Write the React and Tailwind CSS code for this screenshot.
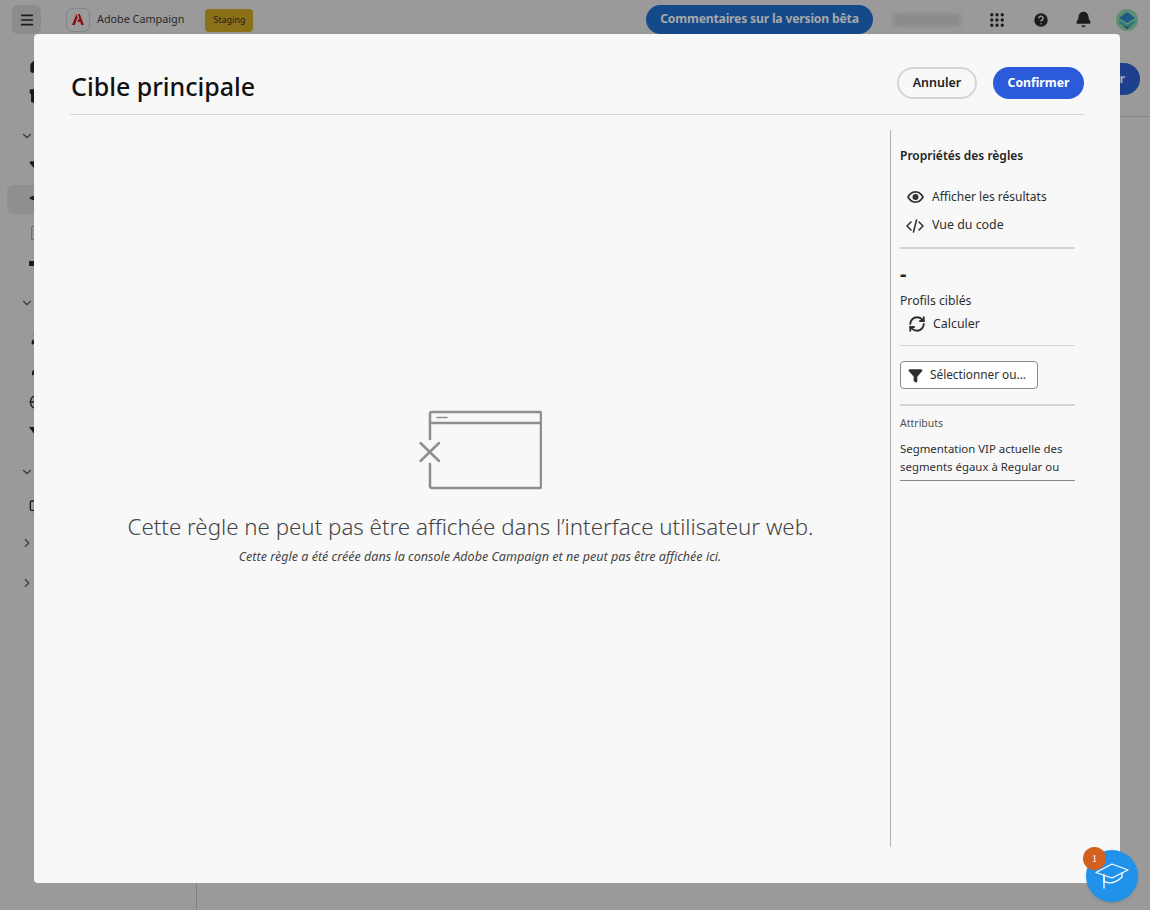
import React from "react";
import { Menu, Grip, CircleHelp, Bell, ChevronDown, ChevronRight, Home, Archive, Filter, Send, FileText, User, Globe, Monitor, RefreshCw } from "lucide-react";

const font = { fontFamily: '"Noto Sans", "Open Sans", sans-serif' };

// greyed out nav behind the dialog, only the left edge of each icon shows
const SideRow = ({ children, active, className = "" }) => (
  <div className={`h-[29px] ml-[7px] w-[60px] flex items-center pl-[22px] rounded-md ${active ? "bg-[#8f8f8f]" : ""} ${className}`}>
    {children}
  </div>
);

const NavChevron = ({ open, className = "" }) => (
  <div className={`h-[29px] pl-[20px] flex items-center text-[#3a3a3a] ${className}`}>
    {open ? <ChevronDown size={14} /> : <ChevronRight size={14} />}
  </div>
);

const Avatar = () => (
  <svg width="22" height="22" viewBox="0 0 22 22" className="ml-[24px]">
    <circle cx="11" cy="11" r="11" fill="#5f8f72" />
    <path d="M11 3L19 9L11 14L3 9Z" fill="#1d5c86" />
    <path d="M3 11L11 16L19 11L19 14L11 19L3 14Z" fill="#2c7a78" />
    <path d="M5 16L11 20L17 16A11 11 0 0 1 5 16Z" fill="#40356f" />
  </svg>
);

const TopBar = () => (
  <div className="h-[39px] flex items-center pl-3 pr-[12px] text-[#1c1c1c]">
    <div className="w-[29px] h-[29px] rounded-md bg-[#8c8c8c] flex items-center justify-center">
      <Menu size={16} strokeWidth={2.5} />
    </div>
    <div className="ml-[25px] w-6 h-6 rounded-md border border-[#858585] flex items-center justify-center">
      <svg width="12" height="11" viewBox="0 0 12 11">
        <path d="M4.2 0H7.8L12 11H9.3L8.2 8H5.4L7.2 3.8L5.6 0Z M4.4 0L0 11H2.8L5.6 3.6Z" fill="#8f1010" />
      </svg>
    </div>
    <span className="ml-[7px] text-[10.8px] text-[#2a2a2a]">Adobe Campaign</span>
    <span className="ml-[21px] mt-px h-[23px] w-[48px] rounded bg-[#8a7118] text-[9px] flex items-center justify-center">Staging</span>
    <div className="ml-auto h-[29px] w-[227px] rounded-full bg-[#154a8a] text-[#a8a8a8] text-[12.2px] font-bold flex items-center justify-center tracking-[-0.2px]">
      Commentaires sur la version bêta
    </div>
    <div className="ml-[20px] w-[68px] h-3 rounded-sm bg-[#8a8a8a] blur-[2px]"></div>
    <Grip size={18} className="ml-[27px]" strokeWidth={2.5} />
    <CircleHelp size={18} className="ml-[26px] fill-[#1c1c1c] stroke-[#9a9a9a]" />
    <Bell size={17} className="ml-[25px] fill-[#1c1c1c]" />
    <Avatar />
  </div>
);

const Sidebar = () => (
  <div className="w-[197px] shrink-0 border-r border-[#7f7f7f] text-[#1c1c1c]">
    <SideRow className="mt-[12px]"><Home size={16} className="fill-[#1c1c1c]" /></SideRow>
    <SideRow className="mt-[1px]"><Archive size={16} className="fill-[#1c1c1c]" /></SideRow>
    <NavChevron open className="mt-[11px]" />
    <SideRow className="mt-[3px]"><Filter size={16} className="fill-[#1c1c1c]" /></SideRow>
    <SideRow active className="mt-[3px]"><Send size={16} className="fill-[#1c1c1c]" /></SideRow>
    <SideRow className="mt-[4px]"><FileText size={16} className="text-[#6f6f6f]" /></SideRow>
    <SideRow className="mt-[2px]"><div className="w-3 h-[5px] bg-[#1c1c1c]"></div></SideRow>
    <NavChevron open className="mt-[10px]" />
    <SideRow className="mt-[6px]"><User size={16} className="fill-[#1c1c1c]" /></SideRow>
    <SideRow className="mt-[1px]"><User size={18} className="fill-[#1c1c1c]" /></SideRow>
    <SideRow className="mt-[5px]"><Globe size={16} /></SideRow>
    <SideRow>
      <svg width="12" height="8" viewBox="0 0 12 8"><path d="M0 0H12L6 8Z" fill="#1c1c1c" /></svg>
    </SideRow>
    <NavChevron open className="mt-[12px]" />
    <SideRow className="mt-[6px]"><Monitor size={16} /></SideRow>
    <NavChevron className="mt-[7px]" />
    <NavChevron className="mt-[11px]" />
  </div>
);

const ErrorIllustration = () => (
  <svg width="126" height="80" viewBox="0 0 126 80" fill="none" stroke="#8e8e8e" strokeWidth="2.5" strokeLinecap="round" strokeLinejoin="round" className="mr-[3px]">
    <path d="M14 29V4a2 2 0 0 1 2-2h108a1 1 0 0 1 1 1v74a1 1 0 0 1-1 1H16a2 2 0 0 1-2-2V54" />
    <path d="M14 13H125" />
    <path d="M21 7.5H31" strokeWidth="1.5" />
    <path d="M4.500 33L23 51M23 33L4.500 51" />
  </svg>
);

const CapIcon = () => (
  <svg width="34" height="26" viewBox="0 0 34 26" fill="none" stroke="#ffffff" strokeWidth="1.3" strokeLinejoin="round" strokeLinecap="round">
    <path d="M1 9.500L17 1L33 7L17 15Z" />
    <path d="M9 12V18C12 21 20 21 27 14V10" />
    <path d="M9 12V25" />
  </svg>
);

const CodeIcon = () => (
  <svg width="18" height="14" viewBox="0 0 18 14" fill="none" stroke="#333" strokeWidth="1.6" strokeLinecap="round" strokeLinejoin="round">
    <path d="M5 3L1 7L5 11" />
    <path d="M13 3L17 7L13 11" />
    <path d="M10.500 1L7.500 13" />
  </svg>
);

const EyeIcon = () => (
  <svg width="17" height="12" viewBox="0 0 17 12">
    <path fillRule="evenodd" fill="#333" d="M8.500 0C12.500 0 15.500 3 17 6C15.500 9 12.500 12 8.500 12C4.500 12 1.500 9 0 6C1.500 3 4.500 0 8.500 0ZM8.500 1.700C5.500 1.700 3.300 3.800 2 6C3.300 8.200 5.500 10.300 8.500 10.300C11.500 10.300 13.700 8.200 15 6C13.700 3.800 11.500 1.700 8.500 1.700Z" />
    <circle cx="8.500" cy="6" r="3" fill="#333" />
  </svg>
);

const RulePanel = () => (
  <div className="w-[194px] shrink-0 border-l border-[#b1b1b1] pl-[9px] text-[#2e2e2e]">
    <h2 className="mt-[17px] text-[12px] leading-[18px] font-semibold text-[#222]">Propriétés des règles</h2>
    <div className="mt-[17px] flex items-center h-[29px] pl-[7px] gap-[8px] text-[12px]">
      <EyeIcon />
      <span>Afficher les résultats</span>
    </div>
    <div className="flex items-center h-[29px] pl-[6px] gap-[8px] text-[12.4px]">
      <CodeIcon />
      <span>Vue du code</span>
    </div>
    <div className="mt-[7px] w-[175px] h-[2px] bg-[#d5d5d5]"></div>
    <div className="mt-[13px] text-[20px] leading-[24px] font-bold text-[#222]">-</div>
    <div className="mt-[6px] text-[12.2px] leading-[18px]">Profils ciblés</div>
    <div className="mt-[5px] flex items-center pl-[8px] gap-[7px] text-[12.4px] leading-[18px]">
      <RefreshCw size={18} strokeWidth={2.5} />
      <span>Calculer</span>
    </div>
    <div className="mt-[12px] w-[175px] h-px bg-[#d5d5d5]"></div>
    <button className="mt-[15px] w-[138px] h-[28px] rounded border border-[#8a8a8a] flex items-center pl-[7px] gap-[7px] text-[11.8px] bg-white">
      <Filter size={15} className="fill-[#2e2e2e]" />
      <span>Sélectionner ou...</span>
    </button>
    <div className="mt-[15px] w-[175px] h-[2px] bg-[#d5d5d5]"></div>
    <div className="mt-[10px] text-[10.5px] leading-[14px] text-[#505050]">Attributs</div>
    <div className="mt-[10px] w-[175px] h-[41px] border-b border-[#8a8a8a] text-[11.4px] leading-[18px] overflow-hidden">
      Segmentation VIP actuelle des segments égaux à Regular ou
    </div>
  </div>
);

export default function App() {
  return (
    <div className="relative w-[1150px] h-[910px] overflow-hidden bg-[#9a9a9a]" style={font}>
      <TopBar />
      <div className="flex">
        <Sidebar />
        <div className="flex-1 h-[871px]">
          <div className="mt-[77px] border-b border-[#858585]"></div>
        </div>
      </div>
      <div className="absolute right-[10px] top-[63px] w-[60px] h-[32px] rounded-full bg-[#1d3f8c] flex items-center justify-end pr-[15px] text-[12.5px] font-bold text-[#a8a8a8]">Créer</div>

      {/* dialog */}
      <div className="absolute left-[34px] top-[34px] w-[1086px] h-[849px] rounded bg-[#f8f8f8] px-[36px] flex flex-col">
        <div className="h-[81px] shrink-0 border-b border-[#d5d5d5] flex items-end pb-[10px]">
          <h1 className="ml-px text-[25px] leading-[36px] font-medium text-[#111]">Cible principale</h1>
          <div className="ml-auto flex gap-4 self-start mt-[33px]">
            <button className="h-[32px] w-[80px] rounded-full border-2 border-[#d5d5d5] text-[12.5px] font-semibold text-[#222]">Annuler</button>
            <button className="h-[32px] w-[91px] rounded-full bg-[#2c5bd9] text-[12.2px] font-bold text-white">Confirmer</button>
          </div>
        </div>
        <div className="mt-[15px] h-[717px] flex">
          <div className="flex-1 flex flex-col items-center pt-[280px] text-[#444]">
            <ErrorIllustration />
            <p className="mt-[22px] mr-[19px] text-[22.3px] leading-[30px] font-light">Cette règle ne peut pas être affichée dans l’interface utilisateur web.</p>
            <p className="mt-[7px] text-[12.55px] leading-[16px] italic text-[#444]">Cette règle a été créée dans la console Adobe Campaign et ne peut pas être affichée ici.</p>
          </div>
          <RulePanel />
        </div>
      </div>

      {/* help launcher */}
      <div className="absolute left-[1086px] top-[850px] w-[52px] h-[52px] rounded-full bg-[#2092ea] flex items-center justify-center shadow">
        <CapIcon />
      </div>
      <div className="absolute left-[1083px] top-[847px] w-[23px] h-[23px] rounded-full bg-[#d4601f] text-white text-[11px] flex items-center justify-center" style={{ fontFamily: '"Liberation Serif", serif' }}>1</div>
    </div>
  );
}
